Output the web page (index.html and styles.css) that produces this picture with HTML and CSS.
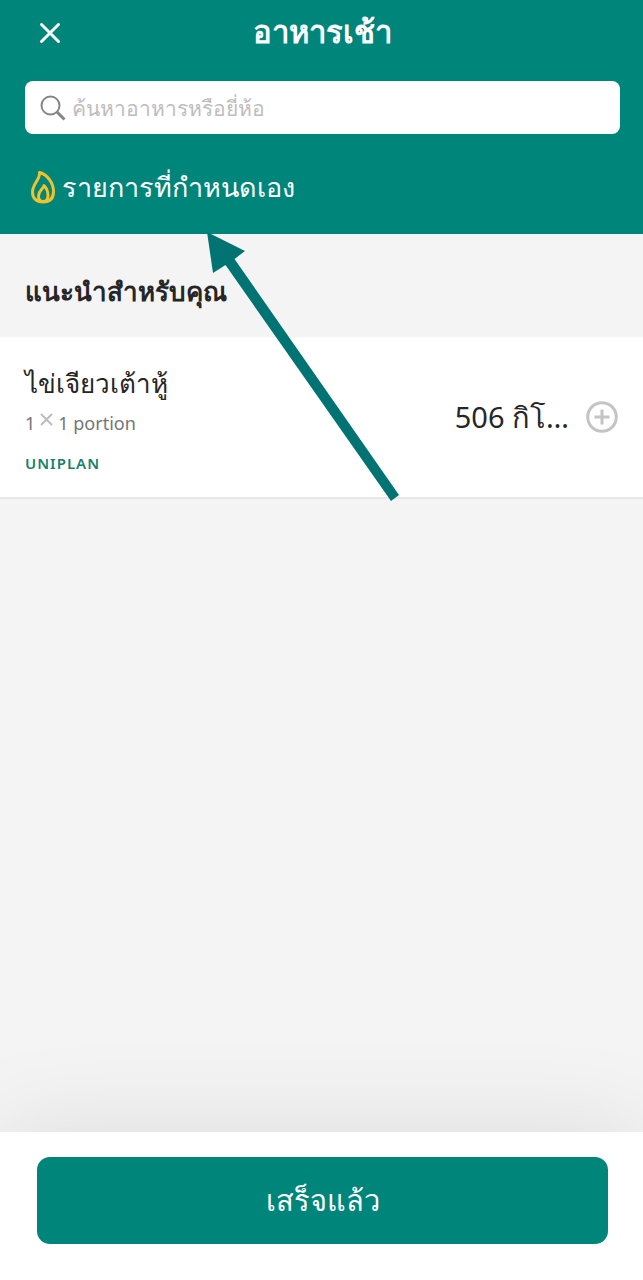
FILE: index.html
```html
<!DOCTYPE html>
<html lang="th">
<head>
<meta charset="utf-8">
<meta name="viewport" content="width=device-width, initial-scale=1">
<title>อาหารเช้า</title>
<link rel="stylesheet" href="styles.css">
</head>
<body>
<div class="screen">
  <header class="header">
    <div class="title-bar">
      <button class="close" type="button" aria-label="ปิด">
        <svg width="22" height="22" viewBox="0 0 22 22"><path d="M2.500 2.500 19.500 19.500M19.500 2.500 2.500 19.500"/></svg>
      </button>
      <h1 class="title">อาหารเช้า</h1>
    </div>
    <label class="search">
      <svg class="search-icon" width="26" height="26" viewBox="0 0 26 26"><circle cx="10.500" cy="10.500" r="9"/><path d="M17 17 24.500 24.500"/></svg>
      <input class="search-input" type="search" placeholder="ค้นหาอาหารหรือยี่ห้อ" aria-label="ค้นหาอาหารหรือยี่ห้อ">
    </label>
    <a class="custom" href="#custom">
      <svg class="flame" width="26" height="34" viewBox="0 0 26 34"><path d="M9.500 2.500C10.500 9.500 2.500 13.500 2.500 22 2.500 28.500 6.500 32 13 32S23.500 28.500 23.500 21.500C23.500 13 17.500 4.500 9.500 2.500Z"/><path d="M14 15.500C13 19.500 8.500 20.500 8.500 26 8.500 29.500 10 31.500 13 31.500S18 29.500 18 25.500C18 21.500 16.500 18 14 15.500Z"/></svg>
      <span>รายการที่กำหนดเอง</span>
    </a>
  </header>
  <main class="content">
    <h2 class="section-title">แนะนำสำหรับคุณ</h2>
    <article class="food">
      <div class="food-info">
        <h3 class="food-name">ไข่เจียวเต้าหู้</h3>
        <p class="portion"><span>1</span><svg class="times" width="13" height="13" viewBox="0 0 13 13"><path d="M1 1 12 12M12 1 1 12"/></svg><span>1 portion</span></p>
        <p class="brand">UNIPLAN</p>
      </div>
      <span class="energy">506 กิโ…</span>
      <button class="add" type="button" aria-label="เพิ่ม">
        <svg width="32" height="32" viewBox="0 0 32 32"><circle cx="16" cy="16" r="14.300"/><path d="M16 8.500V23.500M8.500 16H23.500"/></svg>
      </button>
    </article>
    <svg class="arrow" width="194" height="270" viewBox="0 0 194 270" aria-hidden="true"><path d="M0 0 38 19 27.500 27 192 263 184 269 18.500 33 6 41Z"/></svg>
  </main>
  <footer class="footer">
    <button class="done" type="button">เสร็จแล้ว</button>
  </footer>
</div>
</body>
</html>
```
FILE: styles.css
```css
* { box-sizing: border-box; }
body {
  margin: 0;
  font-family: "Noto Sans", sans-serif;
  color: #262626;
  background: #f4f4f4;
}
h1, h2, h3, p { margin: 0; }
button { padding: 0; border: 0; background: none; font: inherit; cursor: pointer; }
svg { display: block; fill: none; flex: none; }
.screen { display: flex; flex-direction: column; min-height: 100vh; }

.header { background: #00857a; color: #fff; padding: 8px 23px 20px 25px; }
.title-bar { display: grid; grid-template-columns: 50px 1fr 50px; align-items: start; height: 50px; }
.close { display: grid; place-items: center; height: 50px; }
.close svg { stroke: #fff; stroke-width: 3; stroke-linecap: round; }
.title { font-size: 31px; line-height: 46px; font-weight: 700; text-align: center; }
.search {
  display: flex;
  align-items: center;
  gap: 6px;
  height: 53px;
  margin-top: 23px;
  padding: 0 15px;
  background: #fff;
  border-radius: 8px;
}
.search-icon { stroke: #858585; stroke-width: 2; }
.search-icon path { stroke-width: 3; }
.search-input {
  flex: 1;
  min-width: 0;
  height: 100%;
  padding: 0;
  border: 0;
  outline: 0;
  background: none;
  font: inherit;
  font-size: 21px;
}
.search-input::placeholder { color: #bdbdbd; opacity: 1; }
.custom {
  display: flex;
  align-items: center;
  gap: 6px;
  height: 40px;
  margin-top: 33px;
  margin-bottom: 7px;
  padding-left: 5px;
  color: #fff;
  font-size: 27px;
  line-height: 40px;
  text-decoration: none;
}
.flame { stroke: #f0c22b; stroke-width: 3; stroke-linejoin: round; }

.content { flex: 1; position: relative; }
.section-title { padding: 37px 25px 26px; font-size: 26px; line-height: 40px; font-weight: 700; }
.food {
  display: flex;
  align-items: center;
  padding: 22px 25px 22px;
  background: #fff;
  border-bottom: 2px solid #e7e7e7;
}
.food-info { flex: 1; }
.food-name { font-size: 26px; line-height: 48px; font-weight: 400; }
.portion { display: flex; gap: 5px; font-size: 18px; line-height: 32px; color: #767676; }
.times { margin-top: 6px; stroke: #bdbdbd; stroke-width: 2; }
.brand { margin-top: 12px; font-size: 15px; line-height: 24px; font-weight: 600; letter-spacing: 1px; color: #17816b; }
.energy { font-size: 29px; line-height: 40px; margin-right: 17px; }
.add svg { stroke: #c4c4c4; stroke-width: 3; }
.arrow { position: absolute; left: 207px; top: -2px; fill: #007372; pointer-events: none; }

.footer { padding: 25px 35px 36px 37px; background: #fff; box-shadow: 0 0 100px rgba(0, 0, 0, 0.1); }
.done {
  display: block;
  width: 100%;
  height: 87px;
  border-radius: 13px;
  background: #00857a;
  color: #fff;
  font-size: 29px;
}
```
